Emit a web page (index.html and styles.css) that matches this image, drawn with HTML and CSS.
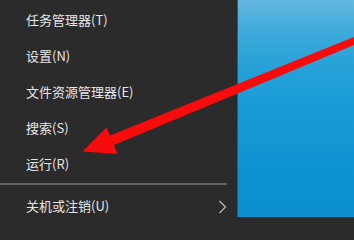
FILE: index.html
```html
<!DOCTYPE html>
<html lang="zh-CN">
<head>
<meta charset="utf-8">
<title>Win+X 菜单</title>
<link rel="stylesheet" href="styles.css">
</head>
<body>
<div class="screen">
  <nav class="menu">
    <div class="item">任务管理器(T)</div>
    <div class="item">设置(N)</div>
    <div class="item">文件资源管理器(E)</div>
    <div class="item">搜索(S)</div>
    <div class="item">运行(R)</div>
    <div class="sep"></div>
    <div class="item item-sub">
      <span>关机或注销(U)</span>
      <svg class="chev" width="9" height="14" viewBox="0 0 9 14"><polyline points="1.5,1 7.5,7 1.5,13" fill="none" stroke="#b5b5b5" stroke-width="1.3"/></svg>
    </div>
  </nav>
  <div class="desktop"></div>
  <svg class="arrow" width="354" height="217" viewBox="0 0 354 217">
    <polygon points="82.5,151.5 106.5,127.5 110,135.4 358.6,35.1 361.4,42 114,145 117.5,154" fill="#f70b0b"/>
  </svg>
</div>
</body>
</html>
```
FILE: styles.css
```css
html, body {
  margin: 0;
  padding: 0;
  overflow: hidden;
  background: #2b2b2b;
}
.screen {
  position: relative;
  display: flex;
  width: 354px;
  height: 217px;
  overflow: hidden;
}
.menu {
  width: 237px;
  flex: none;
  background: #2b2b2b;
  border-right: 1px solid #4e4e4e;
  padding-top: 1.5px;
  box-sizing: content-box;
  font-family: "Noto Sans CJK SC", "Noto Sans", sans-serif;
  font-size: 13px;
  color: #e6e6e6;
}
.item {
  height: 36px;
  line-height: 36px;
  padding-left: 26px;
  white-space: nowrap;
}
.sep {
  height: 2px;
  margin: 1.5px 10px 3px 0;
  background: #5f5f5f;
}
.item-sub {
  display: flex;
  align-items: center;
  justify-content: space-between;
  padding-right: 10px;
}
.chev {
  display: block;
  margin-top: 1px;
}
.desktop {
  flex: 1;
  background: linear-gradient(180deg, #64b8de 0%, #3eabdb 14%, #25a1d8 32%, #189ad5 52%, #1094d1 75%, #0c8fcd 100%);
}
.arrow {
  position: absolute;
  left: 0;
  top: 0;
  pointer-events: none;
}
```
